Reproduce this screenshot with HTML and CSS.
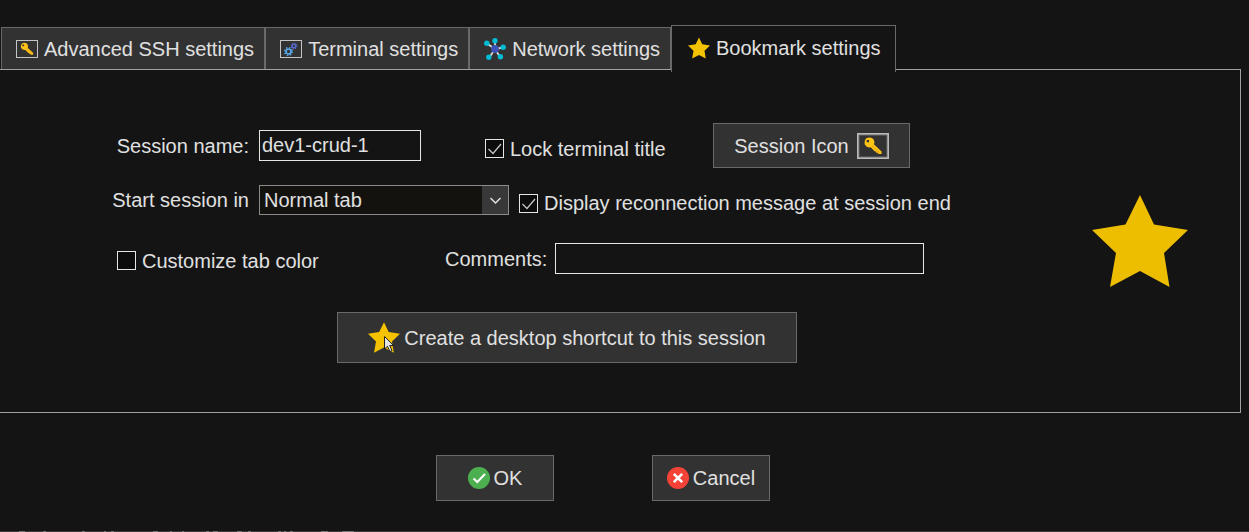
FILE: index.html
```html
<!DOCTYPE html>
<html lang="en">
<head>
<meta charset="utf-8">
<title>Session settings</title>
<link rel="stylesheet" href="styles.css">
</head>
<body>
<svg class="defs" aria-hidden="true">
  <symbol id="star" viewBox="0 0 96 92"><path d="M48 0 62 29.500 96 35 72 58 77.500 92 48 76 18 92 24 58 0 35 33.500 29.500Z" fill="currentColor"/></symbol>
  <symbol id="key" viewBox="0 0 20 20"><path fill-rule="evenodd" fill="#ffc416" d="M2 2Q6-1 10 2Q12.500 5 11 8L19.500 16V19H16L15 17.500H13.500V16H12L7.500 11.500Q3 12 1 8.500Q0 5 2 2ZM3 3.200V5.800H5.600V3.200Z"/><path d="M9 9.500 17.500 18" stroke="#d99a00" fill="none"/></symbol>
</svg>
<main class="dialog">
  <div class="tabs" role="tablist">
    <button class="tab" role="tab" type="button">
      <svg class="tab-icon" viewBox="0 0 22 22"><rect x=".5" y="2.500" width="21" height="17" fill="none" stroke="#c4c4c4"/><use href="#key" x="4.500" y="4.500" width="13" height="13"/></svg>Advanced SSH settings</button>
    <button class="tab" role="tab" type="button">
      <svg class="tab-icon" viewBox="0 0 22 22"><rect x=".5" y="2.500" width="21" height="17" fill="none" stroke="#c4c4c4"/>
        <circle cx="8.500" cy="13.500" r="2.500" fill="none" stroke="#5ba9ee" stroke-width="1.700"/><circle cx="8.500" cy="13.500" r="3.900" fill="none" stroke="#5ba9ee" stroke-width="1.300" stroke-dasharray="1.500 1.560"/>
        <circle cx="14" cy="8" r="1.800" fill="none" stroke="#5968cc" stroke-width="1.400"/><circle cx="14" cy="8" r="2.900" fill="none" stroke="#5968cc" stroke-width="1.100" stroke-dasharray="1.100 1.180"/></svg>Terminal settings</button>
    <button class="tab" role="tab" type="button">
      <svg class="tab-icon" viewBox="0 0 22 22"><path d="M11 11V3M11 11 3 5.500M11 11 19 9.500M11 11 16 19M11 11 5 20" stroke="#d5dce0" stroke-width="1.800"/><circle cx="11" cy="11" r="3.900" fill="#3f51b5"/><g fill="#00bcd4"><circle cx="11" cy="2.700" r="2.700"/><circle cx="2.800" cy="5.300" r="2.700"/><circle cx="19.200" cy="9.300" r="2.700"/><circle cx="16.400" cy="18.800" r="2.700"/><circle cx="4.800" cy="19.300" r="2.700"/></g></svg>Network settings</button>
    <button class="tab tab-active" role="tab" type="button" aria-selected="true">
      <svg class="tab-icon star"><use href="#star"/></svg>Bookmark settings</button>
  </div>

  <section class="panel" role="tabpanel">
    <div class="form">
      <div class="row row-name">
        <label class="field-label" for="name">Session name:</label>
        <input class="text-box name-box" id="name" type="text" value="dev1-crud-1">
        <label class="check check-lock"><input type="checkbox" checked>Lock terminal title</label>
        <button class="button icon-button" type="button">Session Icon
          <svg class="session-icon" viewBox="0 0 32 26"><rect x="1" y="1" width="30" height="24" fill="none" stroke="#bababa" stroke-width="2"/><rect x="2" y="2" width="28" height="22" fill="none" stroke="#6c6c6c"/><use href="#key" x="7" y="4" width="18" height="18"/></svg>
        </button>
      </div>
      <div class="row row-start">
        <label class="field-label" for="start">Start session in</label>
        <div class="drop">
          <select id="start"><option>Normal tab</option></select>
          <span class="drop-arrow"><svg viewBox="0 0 11 7"><path d="M.5 1 5.500 6 10.500 1" fill="none" stroke="#e6e6e6" stroke-width="1.400"/></svg></span>
        </div>
        <label class="check check-reconnect"><input type="checkbox" checked>Display reconnection message at session end</label>
      </div>
      <div class="row row-comments">
        <label class="check check-color"><input type="checkbox">Customize tab color</label>
        <label class="comments-label" for="comments">Comments:</label>
        <input class="text-box comments-box" id="comments" type="text">
      </div>
      <div class="row row-shortcut">
        <button class="button shortcut-button" type="button">
          <span class="shortcut-icon"><svg class="shortcut-star star"><use href="#star"/></svg><svg class="pointer" viewBox="0 0 10 17"><path d="M.5.500V13L3.500 10.300 6 15.500 8 14.500 5.700 9.500H9.500Z" fill="#e4e4e4" stroke="#222"/></svg></span>Create a desktop shortcut to this session</button>
      </div>
    </div>
    <svg class="big-star" role="img" aria-label="Bookmark"><use href="#star"/></svg>
  </section>

  <div class="actions">
    <button class="button action" type="button"><svg class="tab-icon" viewBox="0 0 22 22"><circle cx="11" cy="11" r="11" fill="#4caf50"/><path d="M5.500 11.500 9.300 15 17 7" fill="none" stroke="#fff" stroke-width="2.100"/></svg>OK</button>
    <button class="button action" type="button"><svg class="tab-icon" viewBox="0 0 22 22"><circle cx="11" cy="11" r="11" fill="#f44336"/><path d="M6.800 6.800 15.200 15.200M15.200 6.800 6.800 15.200" stroke="#fff" stroke-width="2.600"/></svg>Cancel</button>
  </div>
  <footer class="edge"><svg viewBox="0 0 360 1"><path d="M19 .5h6M43 .5h3M82 .5h3M104 .5h2M111 .5h3M153 .5h5M170 .5h2M182 .5h2M206 .5h3M213 .5h5M237 .5h5M248 .5h3M278 .5h3M284 .5h2M290 .5h3M321 .5h7M342 .5h12" stroke="#777"/></svg></footer>
</main>
</body>
</html>
```
FILE: styles.css
```css
* { box-sizing: border-box; }

body {
  margin: 0;
  background: #141414;
  color: #e0e0e0;
  font: 20px/24px "Liberation Sans", Arial, sans-serif;
}

button, input, select { font: inherit; color: inherit; }
button { white-space: nowrap; }
svg { display: block; flex: none; }
.defs { position: absolute; width: 0; height: 0; }

.dialog {
  display: flex;
  flex-direction: column;
  min-height: 100vh;
  padding-top: 25px;
}

.tabs {
  display: flex;
  align-items: flex-end;
  padding-left: 1px;
}

.tab {
  display: flex;
  align-items: center;
  gap: 6px;
  height: 42px;
  padding: 0 10px 0 14px;
  border: 1px solid #696969;
  border-bottom: 0;
  background: #323232;
}

.tab-icon { width: 22px; height: 22px; }
.star { color: #f4c200; }

.tab-active {
  position: relative;
  height: 47px;
  margin-bottom: -3px;
  padding: 0 14px 2px 16px;
  background: #141414;
}

.panel {
  display: flex;
  align-items: flex-start;
  justify-content: space-between;
  margin-right: 8px;
  padding: 53px 52px 49px 0;
  border: 1px solid #a0a0a0;
  border-left: 0;
}

.row { display: flex; align-items: center; white-space: nowrap; }
.row-name { height: 45px; }
.row-start { margin-top: 17px; }
.row-comments { margin-top: 28px; padding-left: 117px; }
.row-shortcut { margin-top: 38px; padding-left: 337px; }

.field-label {
  width: 249px;
  margin-right: 10px;
  text-align: right;
}

.text-box {
  height: 31px;
  padding: 0 2px;
  border: 1px solid #e6e6e6;
  border-radius: 0;
  background: #141414;
}

.name-box { width: 162px; }
.comments-box { width: 369px; }
.comments-label { width: 110px; }

.check {
  display: flex;
  align-items: center;
  gap: 6px;
  padding-top: 6px;
}

.check input {
  appearance: none;
  width: 19px;
  height: 19px;
  margin: 0;
  border: 1px solid #e6e6e6;
  background: #0c0c0c;
}

.check input:checked {
  background: #0c0c0c url("data:image/svg+xml,%3Csvg xmlns='http://www.w3.org/2000/svg' viewBox='0 0 17 17'%3E%3Cpath d='M2.500 9 7 13.500 15 4' fill='none' stroke='%23c8c8c8' stroke-width='1.200'/%3E%3C/svg%3E");
}

.check-lock { width: 228px; margin-left: 64px; }
.check-reconnect { margin-left: 10px; }
.check-color { width: 328px; padding-top: 4px; }

.drop { position: relative; width: 250px; }

.drop select {
  appearance: none;
  display: block;
  width: 100%;
  height: 30px;
  padding: 0 4px;
  border: 1px solid #8c8c8c;
  border-radius: 0;
  background: #14120f;
}

.drop-arrow {
  position: absolute;
  inset: 1px 1px 1px auto;
  display: grid;
  place-items: center;
  width: 26px;
  background: #383838;
  pointer-events: none;
}

.drop-arrow svg { width: 11px; height: 7px; }

.button {
  display: flex;
  align-items: center;
  justify-content: center;
  padding: 0;
  border: 1px solid #696969;
  background: #323232;
}

.icon-button { gap: 8px; width: 197px; height: 45px; }
.session-icon { width: 32px; height: 26px; }
.shortcut-button { gap: 4px; width: 460px; height: 51px; }
.shortcut-icon { position: relative; }
.shortcut-star { width: 32px; height: 31px; }

.pointer {
  position: absolute;
  left: 16px;
  top: 14px;
  width: 10px;
  height: 17px;
}

.big-star { width: 96px; height: 92px; margin-top: 72px; color: #edbd00; }

.actions {
  display: flex;
  justify-content: center;
  gap: 98px;
  padding: 42px 43px 0 0;
}

.action { gap: 4px; width: 118px; height: 46px; }

.edge { margin-top: auto; background: #3c3a3a; }
.edge svg { width: 360px; height: 1px; }
```
